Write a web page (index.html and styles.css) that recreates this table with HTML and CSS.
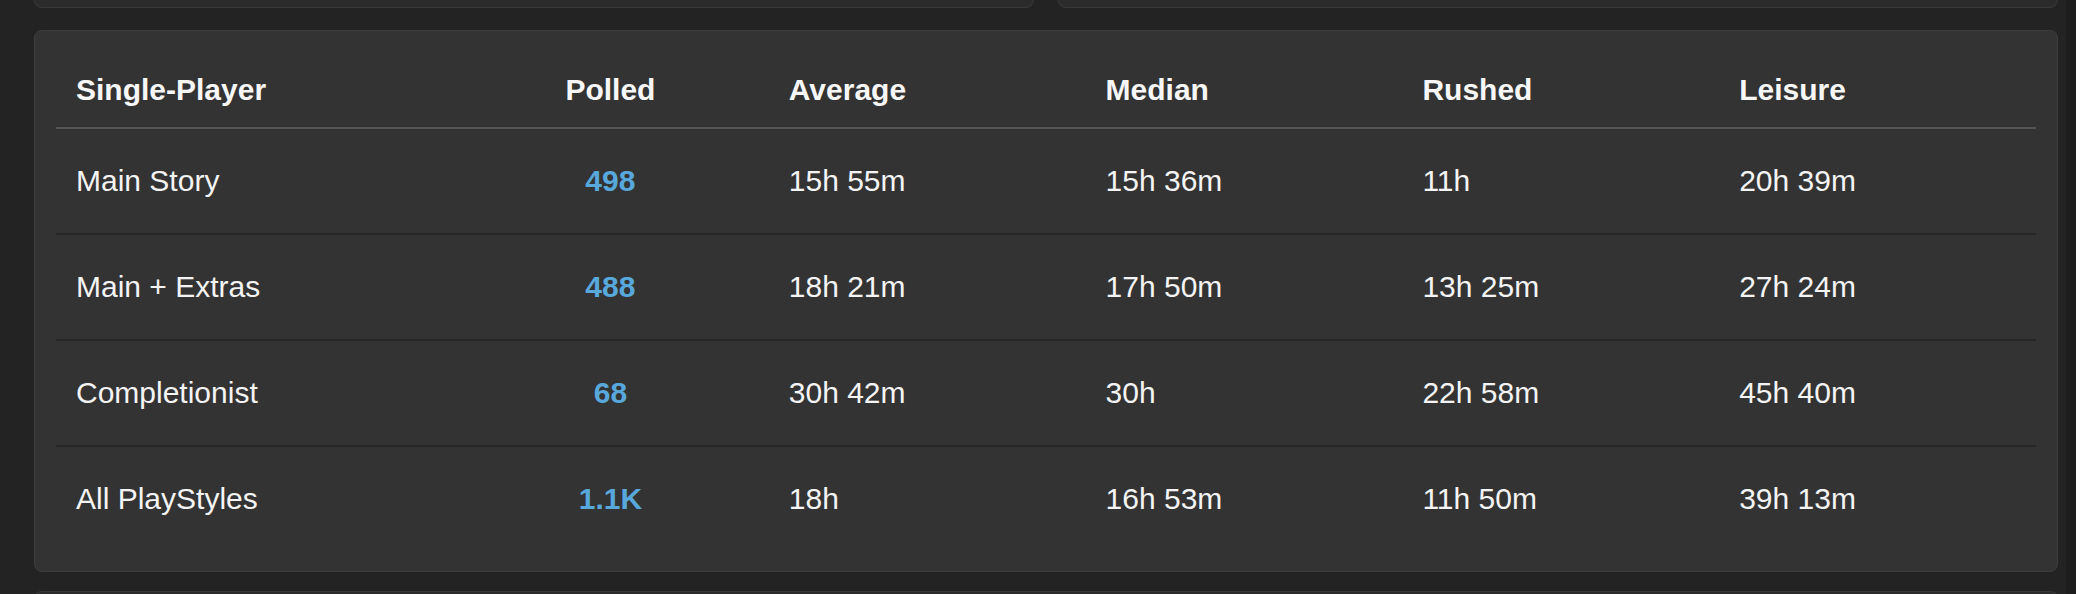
FILE: index.html
```html
<!DOCTYPE html>
<html lang="en">
<head>
<meta charset="utf-8">
<title>Single-Player times</title>
<link rel="stylesheet" href="styles.css">
</head>
<body>
<div class="page">
  <div class="top-row">
    <div class="stub-card"></div>
    <div class="stub-card"></div>
  </div>
  <section class="card">
    <table class="times">
      <colgroup>
        <col class="c-first">
        <col class="c-col"><col class="c-col"><col class="c-col"><col class="c-col"><col class="c-col">
      </colgroup>
      <thead>
        <tr>
          <th>Single-Player</th>
          <th class="center">Polled</th>
          <th>Average</th>
          <th>Median</th>
          <th>Rushed</th>
          <th>Leisure</th>
        </tr>
      </thead>
      <tbody>
        <tr>
          <td>Main Story</td>
          <td class="center polled">498</td>
          <td>15h 55m</td>
          <td>15h 36m</td>
          <td>11h</td>
          <td>20h 39m</td>
        </tr>
        <tr>
          <td>Main + Extras</td>
          <td class="center polled">488</td>
          <td>18h 21m</td>
          <td>17h 50m</td>
          <td>13h 25m</td>
          <td>27h 24m</td>
        </tr>
        <tr>
          <td>Completionist</td>
          <td class="center polled">68</td>
          <td>30h 42m</td>
          <td>30h</td>
          <td>22h 58m</td>
          <td>45h 40m</td>
        </tr>
        <tr>
          <td>All PlayStyles</td>
          <td class="center polled">1.1K</td>
          <td>18h</td>
          <td>16h 53m</td>
          <td>11h 50m</td>
          <td>39h 13m</td>
        </tr>
      </tbody>
    </table>
  </section>
  <div class="stub-card next"></div>
</div>
</body>
</html>
```

FILE: styles.css
```css
html, body {
  margin: 0;
  padding: 0;
  background: #1d1d1d;
  height: 100%;
  overflow: hidden;
}

.page {
  width: 2066px;
  min-height: 594px;
  box-sizing: border-box;
  background: #232323;
  padding: 0 8px 0 34px;
  font-family: "Liberation Sans", Arial, Helvetica, sans-serif;
  color: #f4f4f4;
}

.top-row {
  display: flex;
  gap: 24px;
}

.top-row .stub-card {
  flex: 1;
  height: 7px;
  background: #2b2b2b;
  border: 1px solid #383838;
  border-top: none;
  border-radius: 0 0 8px 8px;
}

.card {
  margin-top: 22px;
  background: #333333;
  border: 1px solid #3d3d3d;
  border-radius: 8px;
  padding: 20px 21px;
}

.stub-card.next {
  margin-top: 19px;
  height: 20px;
  background: #2b2b2b;
  border: 1px solid #383838;
  border-bottom: none;
  border-radius: 8px 8px 0 0;
}

.times {
  width: 100%;
  border-collapse: collapse;
  table-layout: fixed;
  font-size: 30px;
  line-height: 34px;
}

.c-first { width: 20%; }
.c-col { width: 16%; }

.times th {
  text-align: left;
  font-weight: bold;
  color: #f7f7f7;
  padding: 22px 20px 20px;
  border-bottom: 2px solid #555555;
}

.times td {
  padding: 35px 20px;
  color: #f4f4f4;
  border-bottom: 2px solid #272727;
  white-space: nowrap;
}

.times tbody tr:last-child td {
  border-bottom: none;
}

.times .center {
  text-align: center;
}

.times td.polled {
  color: #58a8dc;
  font-weight: bold;
}
```
